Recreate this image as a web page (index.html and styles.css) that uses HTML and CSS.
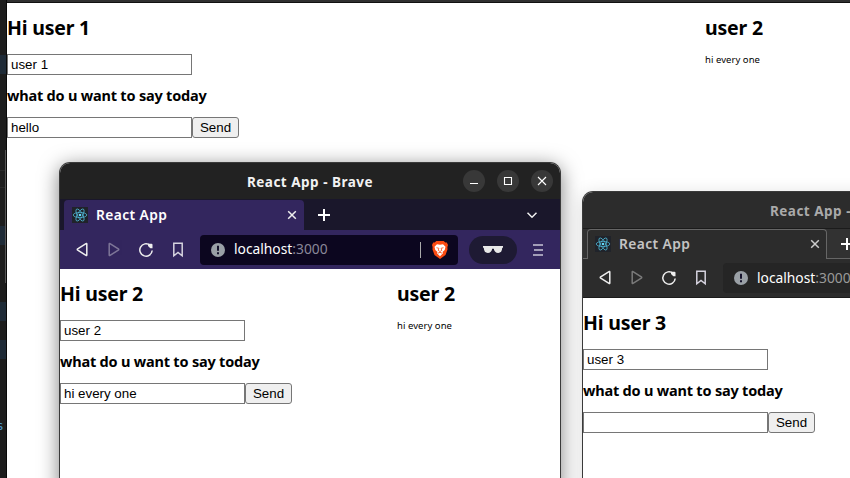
FILE: index.html
```html
<!DOCTYPE html>
<html lang="en">
<head>
<meta charset="utf-8">
<title>React App</title>
<link rel="stylesheet" href="styles.css">
</head>
<body>
<svg class="defs" width="0" height="0" aria-hidden="true">
  <symbol id="react" viewBox="0 0 16 16"><rect width="16" height="16" fill="#20232a"/><g fill="none" stroke="#4fb3d0" stroke-width=".8"><ellipse cx="8" cy="8" rx="6.8" ry="2.6"/><ellipse cx="8" cy="8" rx="6.8" ry="2.6" transform="rotate(60 8 8)"/><ellipse cx="8" cy="8" rx="6.8" ry="2.6" transform="rotate(120 8 8)"/></g><circle cx="8" cy="8" r="1.3" fill="#61dafb"/></symbol>
  <symbol id="back" viewBox="0 0 16 16"><path d="M12.800 2v11q0 .9-.8.4L3.700 8.200q-.9-.6 0-1.300L12 1.600q.8-.5.8.4z"/></symbol>
  <symbol id="reload" viewBox="0 0 16 16"><path d="M12 3.200A6.200 6.200 0 1 0 14.200 8.500"/><path class="solid" d="M10 1.700h3.500q1 0 1 1v3.600h-2.200L10 4z"/></symbol>
  <symbol id="bookmark" viewBox="0 0 16 16"><path d="M3.800 1.300h8.400v12.500L8 10.500l-4.200 3.300z"/></symbol>
  <symbol id="info" viewBox="0 0 16 16"><circle cx="8" cy="8" r="7" fill="#9aa0a6"/><path d="M8 3.700v5M8 10.300v2" stroke="#15122b" stroke-width="2"/></symbol>
  <symbol id="close" viewBox="0 0 16 16"><path d="M4.200 4.200l7.600 7.600M11.800 4.200l-7.600 7.600"/></symbol>
  <symbol id="plus" viewBox="0 0 16 16"><path d="M8 2v12M2 8h12"/></symbol>
</svg>
<div class="desktop">
  <div class="editor"><span class="code">s</span></div>
  <main class="page page-main">
    <section class="form">
      <h2>Hi user 1</h2>
      <input type="text" value="user 1">
      <h3>what do u want to say today</h3>
      <div class="row"><input type="text" value="hello"><button>Send</button></div>
    </section>
    <section class="messages"><h2>user 2</h2><p>hi every one</p></section>
  </main>

  <div class="window window-active">
    <header class="titlebar">
      <span class="title">React App - Brave</span>
      <div class="controls">
        <span><svg viewBox="0 0 22 22"><path d="M7 13.500h8"/></svg></span>
        <span><svg viewBox="0 0 22 22"><path d="M7.500 7.500h7v7h-7z"/></svg></span>
        <span><svg viewBox="0 0 22 22"><path d="M7 7l8 8M15 7l-8 8"/></svg></span>
      </div>
    </header>
    <div class="tabstrip">
      <div class="tab"><svg class="favicon"><use href="#react"/></svg><span class="tab-name">React App</span><svg class="icon tab-close"><use href="#close"/></svg></div>
      <svg class="icon plus"><use href="#plus"/></svg>
      <svg class="icon chevron" viewBox="0 0 16 16"><path d="M3.500 5.800L8 10.300l4.500-4.500"/></svg>
    </div>
    <nav class="toolbar">
      <svg class="icon"><use href="#back"/></svg>
      <svg class="icon forward"><use href="#back"/></svg>
      <svg class="icon"><use href="#reload"/></svg>
      <svg class="icon bookmark"><use href="#bookmark"/></svg>
      <div class="address">
        <svg class="info"><use href="#info"/></svg><span class="url">localhost<i>:3000</i></span>
        <b class="divider"></b>
        <svg class="shield" viewBox="0 0 16 18"><path fill="#fb4b12" d="M4.300 0h7.400l1.600 1.600 1.500-.1L16 4l-.6 2 .1 2.600-2 5.400L8 18l-5.500-4-2-5.400L.6 6 0 4l1.200-2.500 1.500.1z"/><path fill="#fff" d="M5 3.200l3 .5 3-.5 2.500 2.600-.8 3.200-2.200 2 .5 1.200L8 15.200l-3-3L5.500 11 3.300 9l-.8-3.200z"/><path fill="none" stroke="#fb4b12" stroke-width=".8" d="M4.500 6.700l2.400.6L6.200 9.300 8 10.600l1.800-1.300-.7-2 2.400-.6M5.900 12.200L8 11.300l2.100.9"/></svg>
      </div>
      <span class="pill"><svg viewBox="0 0 20 8"><path d="M0 0h20v1.500l-.8.6C19 5.300 17.800 7 15.200 7c-2.500 0-4-1.700-4.400-4.200H9.200C8.800 5.300 7.300 7 4.800 7 2.200 7 1 5.300.8 2.100L0 1.500z"/></svg></span>
      <svg class="menu" viewBox="0 0 10 12"><path d="M0 1h10M1 6h9M0 11h10"/></svg>
    </nav>
    <div class="page">
      <section class="form">
        <h2>Hi user 2</h2>
        <input type="text" value="user 2">
        <h3>what do u want to say today</h3>
        <div class="row"><input type="text" value="hi every one"><button>Send</button></div>
      </section>
      <section class="messages"><h2>user 2</h2><p>hi every one</p></section>
    </div>
  </div>

  <div class="window window-idle">
    <header class="titlebar"><span class="title">React App - Brave</span></header>
    <div class="tabstrip">
      <div class="tab"><svg class="favicon"><use href="#react"/></svg><span class="tab-name">React App</span><svg class="icon tab-close"><use href="#close"/></svg></div>
      <svg class="icon plus"><use href="#plus"/></svg>
    </div>
    <nav class="toolbar">
      <svg class="icon"><use href="#back"/></svg>
      <svg class="icon forward"><use href="#back"/></svg>
      <svg class="icon"><use href="#reload"/></svg>
      <svg class="icon bookmark"><use href="#bookmark"/></svg>
      <div class="address"><svg class="info"><use href="#info"/></svg><span class="url">localhost<i>:3000</i></span></div>
    </nav>
    <div class="page">
      <section class="form">
        <h2>Hi user 3</h2>
        <input type="text" value="user 3">
        <h3>what do u want to say today</h3>
        <div class="row"><input type="text" value=""><button>Send</button></div>
      </section>
    </div>
  </div>
</div>
</body>
</html>
```
FILE: styles.css
```css
* { box-sizing: border-box; }
body { margin: 0; font-family: "Noto Sans", sans-serif; }
i { font-style: normal; }
.defs { position: absolute; }

.desktop {
  position: relative;
  width: 850px;
  height: 478px;
  overflow: hidden;
  display: grid;
  grid-template-columns: 7px 1fr;
  background: #1d1d1d;
}

/* Sliver of the code editor behind the browser windows */
.editor {
  overflow: hidden;
  padding-top: 417px;
  border-right: 1px solid #090909;
  background:
    linear-gradient(#555, #555) 5px 150px / 1px 133px no-repeat,
    linear-gradient(#1f2b37, #1f2b37) 0 55px / 6px 19px no-repeat,
    linear-gradient(#292929, #292929) 0 170px / 5px 1px no-repeat,
    linear-gradient(#292929, #292929) 0 187px / 5px 1px no-repeat,
    linear-gradient(#1f2b37, #1f2b37) 0 226px / 5px 19px no-repeat,
    linear-gradient(#1f2b37, #1f2b37) 0 302px / 6px 19px no-repeat,
    linear-gradient(#1f2b37, #1f2b37) 0 340px / 6px 19px no-repeat,
    #1d1d1d;
}
.code {
  display: block;
  margin-left: -4px;
  font: 13px/18px "DejaVu Sans Mono", monospace;
  color: #4a94c4;
}

.page { display: flex; background: #fff; color: #000; }
.page-main { margin-top: 2px; border-top: 1px solid #111; box-shadow: 0 -2px #303030; }
.form { width: 337px; flex: none; }
.page-main .form { width: 698px; }
h2 {
  margin: 11px 0 12px;
  font-size: 19.500px;
  line-height: 28px;
  letter-spacing: -.2px;
  font-weight: 700;
  white-space: nowrap;
}
h3 {
  margin: 8px 0 9px;
  font-size: 14.500px;
  line-height: 25px;
  letter-spacing: -.2px;
  font-weight: 700;
  white-space: nowrap;
}
p { margin: 0; font-size: 9.500px; line-height: 12px; letter-spacing: .05px; }
input, button {
  height: 21px;
  font: 13.333px/15px "Liberation Sans", sans-serif;
  color: #000;
  border: 1px solid #767676;
}
input { display: block; width: 185px; padding: 1px 3px; background: #fff; border-radius: 0; }
button { width: 47px; padding: 0; background: #efefef; border-radius: 3px; }
.row { display: flex; }

.window {
  position: absolute;
  border: 1px solid #3a3a3a;
  border-bottom: 0;
  border-radius: 11px 11px 0 0;
  overflow: hidden;
  background: #fff;
}
.window-active { left: 59px; top: 162px; width: 502px; height: 330px; box-shadow: 0 4px 20px rgba(0,0,0,.5); }
.window-idle { left: 582px; top: 191px; width: 502px; height: 330px; box-shadow: 0 3px 18px rgba(0,0,0,.14); }

.titlebar {
  display: grid;
  grid-template-columns: 1fr auto 1fr;
  align-items: center;
  height: 36px;
  background: #222;
  color: #f2f2f2;
}
.title { grid-column: 2; position: relative; top: 1px; font-size: 13.500px; line-height: 20px; letter-spacing: .5px; font-weight: 700; white-space: nowrap; }
.controls { display: flex; justify-content: flex-end; gap: 12px; padding-right: 7px; }
.controls span { width: 22px; height: 22px; border-radius: 50%; background: #383838; }
.controls svg { display: block; width: 22px; height: 22px; fill: none; stroke: #fff; stroke-width: 1.100; }

.tabstrip { display: flex; align-items: center; height: 31px; padding: 1px 20px 0 4px; background: #1a172b; }
.tab { display: flex; align-items: center; width: 240px; height: 30px; padding: 0 4px 0 8px; border-radius: 4px 4px 0 0; background: #33265e; color: #fff; }
.favicon { width: 16px; height: 16px; margin-right: 8px; }
.tab-name { font-size: 13.800px; line-height: 20px; letter-spacing: .4px; font-weight: 600; white-space: nowrap; }
.icon { flex: none; width: 16px; height: 16px; fill: none; stroke: #eee; stroke-width: 1.500; }
.solid { fill: #eee; stroke: none; }
.tab-close { margin-left: auto; }
.plus { margin-left: 12px; stroke: #fff; stroke-width: 2; }
.chevron { margin-left: auto; }

.toolbar { display: flex; align-items: center; gap: 16px; height: 39px; padding: 0 17px 0 14px; background: #33265e; }
.forward { transform: scaleX(-1); opacity: .4; }
.bookmark { stroke: #d6d3df; }
.address { display: flex; align-items: center; width: 258px; height: 30px; margin-left: -2px; padding: 0 10px; border-radius: 4px; background: #0c061f; flex: none; }
.info { width: 16px; height: 16px; margin-right: 8px; }
.url { margin-top: -1px; font-size: 13.800px; line-height: 20px; color: #fff; }
.url i { color: #8a8799; }
.divider { width: 1px; height: 16px; margin: 0 11px 0 auto; background: #aaa; }
.shield { width: 16px; height: 18px; }
.pill { display: flex; align-items: center; justify-content: center; width: 48px; height: 28px; margin-left: -5px; border-radius: 14px; background: #1e1a33; }
.pill svg { width: 20px; height: 8px; fill: #e8e8e8; }
.menu { width: 10px; height: 12px; stroke: #c9c5d6; stroke-width: 1.600; }

.window-idle .titlebar { background: #2c2c2c; color: #aaa; border-bottom: 1px solid #1b1b1b; height: 37px; }
.window-idle .tabstrip { align-items: stretch; height: 30px; padding: 0; background: linear-gradient(#666, #666) 0 100% / 100% 1px no-repeat, #323232; }
.window-idle .tab { height: 30px; margin-left: 4px; padding: 0 3px 2px 7px; border: 1px solid #666; border-bottom: 0; background: #2c2c2c; color: #c4c4c4; }
.window-idle .tab-close { stroke: #ccc; }
.window-idle .plus { margin-top: 7px; }
.window-idle .toolbar { height: 39px; background: #2c2c2c; border-bottom: 1px solid #1b1b1b; }
.window-idle .address { background: #252525; }
.window-idle .url i { color: #999; }
```
